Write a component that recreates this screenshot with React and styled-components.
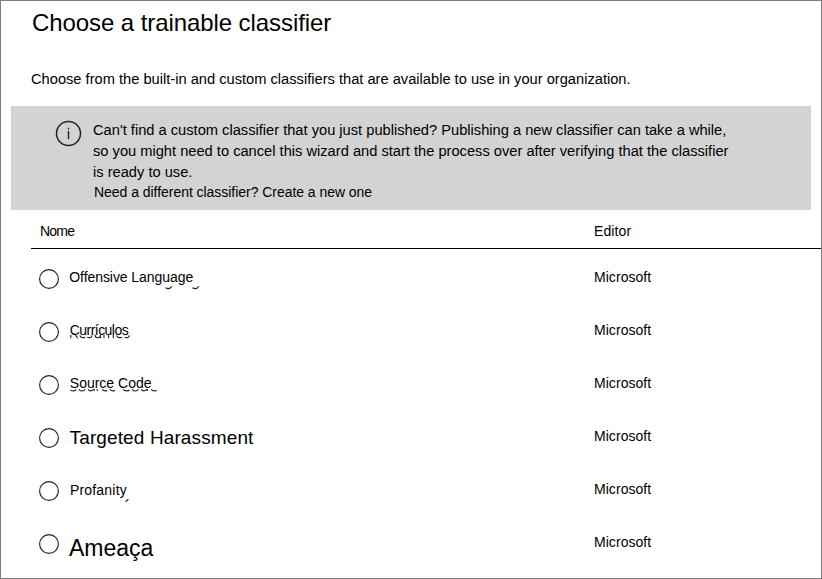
import React from "react";
import styled, { createGlobalStyle } from "styled-components";

const GlobalStyle = createGlobalStyle`
  body { margin: 0; background: #fff; }
  * { box-sizing: border-box; }
`;

const Page = styled.main`
  width: 822px;
  height: 579px;
  border: 1px solid #7f7f7f;
  background: #fff;
  color: #000;
  font-family: "Liberation Sans", Arial, sans-serif;
  font-size: 14px;
  white-space: nowrap;
  overflow: hidden;
`;

const Title = styled.h1`
  margin: 8px 0 0 31px;
  font-size: 24px;
  line-height: 28px;
  font-weight: 400;
  letter-spacing: -0.08px;
`;

const Intro = styled.p`
  margin: 32px 0 0 30px;
  font-size: 14.67px;
  line-height: 20px;
`;

const Banner = styled.section`
  display: flex;
  width: 800px;
  height: 104px;
  margin: 17px 0 0 10px;
  padding: 14px 0 0 44px;
  background: #d3d3d3;
`;

const InfoIcon = styled.svg`
  flex: none;
  width: 27px;
  height: 27px;
  margin: 0 11px 0 0;
`;

const BannerText = styled.p`
  margin: 0;
  font-size: 14.67px;
  line-height: 21px;
`;

const CreateLink = styled.a`
  display: block;
  padding-left: 1px;
  font-size: 14px;
  line-height: 18px;
  letter-spacing: -0.04px;
  color: inherit;
`;

const HeaderRow = styled.div`
  display: grid;
  grid-template-columns: 554px 1fr;
  height: 39px;
  margin-left: 30px;
  padding: 11px 0 0 9px;
  border-bottom: 1px solid #000;
  line-height: 20px;
`;

const HeaderCell = styled.span`
  letter-spacing: ${(p) => p.$spacing}px;
`;

const Rows = styled.div`
  padding-top: 3px;
`;

const Row = styled.label`
  display: grid;
  grid-template-columns: 30px 525px 1fr;
  height: 53px;
  padding: 15px 0 0 38px;
`;

const Radio = styled.svg`
  width: 20px;
  height: 20px;
  margin-top: 2px;
`;

const Name = styled.span`
  position: relative;
  height: 20px;
  margin-top: ${(p) => p.$top}px;
  padding-left: ${(p) => p.$indent || 0}px;
  font-size: ${(p) => p.$size}px;
  line-height: 20px;
  letter-spacing: ${(p) => p.$spacing}px;
`;

/* Short stray strokes just under a label. */
const Marks = styled.svg`
  position: absolute;
  left: 0;
  top: 14px;
  width: 100px;
  height: 8px;
  overflow: visible;
  fill: none;
  stroke: #222;
  stroke-width: 1.1;
`;

const Publisher = styled.span`
  line-height: 20px;
  letter-spacing: 0.05px;
`;

const classifiers = [
  {
    name: "Offensive Language", size: 14, spacing: -0.07, top: 0, indent: 0.3,
    marks: "M96.5 6.8q4 2.2 6.5-1.6M123.5 6.8q4 2.2 6.5-1.6",
  },
  {
    name: "Currículos", size: 14, spacing: -0.55, top: 0, indent: 0.8,
    marks: "M1.8 .8v3.4M6.3 1l2.5 3.2M10.8 1.4q1.5 3.3 5.5 1.8M18.2 3.2q4.5 1.4 4.8-1.8M26 .8q0 3 2.6 3t2.8-2.5M31.5 .8v3.4M35 .8v3.4M39.6 .8v3.4M44.3 .8v3.4M47.5 1.4q1.5 3.3 5.5 1.8M55.5 3.2q4.5 1.4 4.8-1.8",
  },
  {
    name: "Source Code", size: 14, spacing: 0, top: 0, indent: 0.8,
    marks: "M1.2 3.2q5 1.8 6-.9M9.8 2.3q3 3.4 6.5 0M19.2 2.3q1.8 3.2 5.3 0M25.2 2v2M28.3 2v2M33.2 2.3q1.8 2.4 5 1.1M41 2.3q1.8 2.4 5 1.1M54 2.3q2 2.4 6.5 1.1M63 2.3q3 3.4 6.5 0M72.2 2.3q2 3.2 5.8 0M78.4 2v2M82.2 2.3q1.8 2.4 5.6 1.1",
  },
  { name: "Targeted Harassment", size: 19, spacing: 0.12, top: 2, indent: 0.6 },
  { name: "Profanity", size: 14, spacing: 0.2, top: 1, indent: 0.9, marks: "M56.3 7.2q2 .2 3-2.2" },
  { name: "Ameaça", size: 23, spacing: 0, top: 6 },
];

export default function App() {
  return (
    <>
      <GlobalStyle />
      <Page>
        <Title>Choose a trainable classifier</Title>
        <Intro>Choose from the built-in and custom classifiers that are available to use in your organization.</Intro>
        <Banner>
          <InfoIcon viewBox="0 0 27 27" fill="none" stroke="#222" aria-hidden="true">
            <circle cx="13.5" cy="13.5" r="12" strokeWidth="1.5" />
            <path d="M13.5 11v8.2M13.5 7.8v1.7" strokeWidth="1.4" />
          </InfoIcon>
          <BannerText>
            Can't find a custom classifier that you just published? Publishing a new classifier can take a while,
            <br />
            so you might need to cancel this wizard and start the process over after verifying that the classifier
            <br />
            is ready to use.
            <CreateLink>Need a different classifier? Create a new one</CreateLink>
          </BannerText>
        </Banner>
        <HeaderRow>
          <HeaderCell $spacing={-0.8}>Nome</HeaderCell>
          <HeaderCell $spacing={0.1}>Editor</HeaderCell>
        </HeaderRow>
        <Rows>
          {classifiers.map(({ name, size, spacing, top, indent, marks }) => (
            <Row key={name}>
              <Radio viewBox="0 0 20 20" aria-hidden="true">
                <circle cx="10" cy="10" r="9.4" fill="none" stroke="#222" strokeWidth="1.15" />
              </Radio>
              <Name $size={size} $spacing={spacing} $top={top} $indent={indent}>
                {name}
                {marks && (
                  <Marks viewBox="0 0 100 8" aria-hidden="true">
                    <path d={marks} />
                  </Marks>
                )}
              </Name>
              <Publisher>Microsoft</Publisher>
            </Row>
          ))}
        </Rows>
      </Page>
    </>
  );
}
